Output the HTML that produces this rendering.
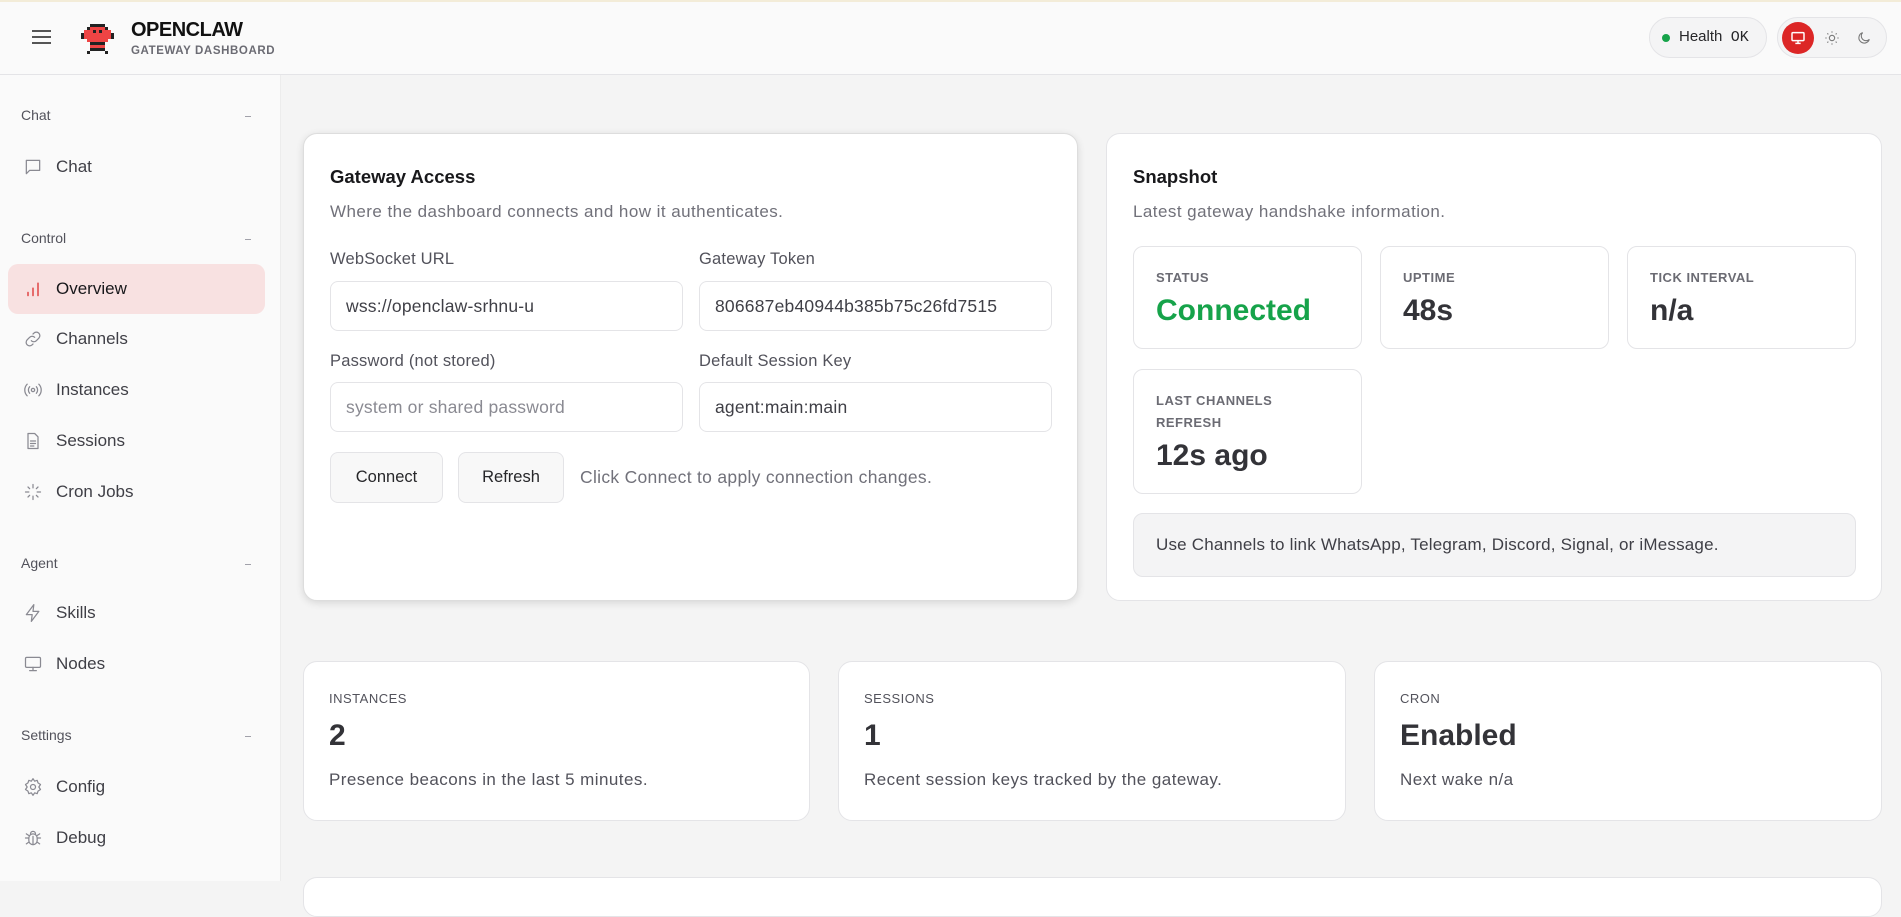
<!DOCTYPE html>
<html><head><meta charset="utf-8"><style>
*{box-sizing:border-box;margin:0;padding:0}
body{width:1901px;height:881px;overflow:hidden;background:#f4f4f4;font-family:"Liberation Sans",sans-serif;color:#27272a;position:relative}
.abs{position:absolute}
.hdr{left:0;top:0;width:1901px;height:75px;background:#fafafa;border-bottom:1px solid #e4e4e7;border-top:2px solid #f3ecd8}
.side{left:0;top:75px;width:281px;height:806px;background:#fafafa;border-right:1px solid #ececec}
.sec{position:absolute;left:21px;font-size:14px;color:#52525b}
.sec i{position:absolute;left:224px;top:9px;width:6px;height:1px;background:#a1a1aa}
.item{position:absolute;left:8px;width:257px;height:50px;border-radius:10px;font-size:17px;color:#3f3f46;display:flex;align-items:center;padding-left:15px}
.item svg{width:20px;height:20px;margin-right:13px;fill:none;stroke:#8a8a92;stroke-width:1.5;stroke-linecap:round;stroke-linejoin:round}
.card{background:#fff;border:1px solid #e4e4e7;border-radius:14px}
.t{font-size:18.5px;font-weight:bold;color:#18181b}
.sub{font-size:17px;letter-spacing:.45px;color:#71717a}
.lbl{font-size:16.5px;letter-spacing:.2px;color:#52525b}
.inp{border:1px solid #e4e4e7;border-radius:8px;background:#fff;height:50px;font-size:17.5px;letter-spacing:.2px;padding-left:15px;display:flex;align-items:center;color:#3f3f46}
.btn{border:1px solid #e4e4e7;border-radius:8px;background:#f8f8f8;height:51px;font-size:16.5px;display:flex;align-items:center;justify-content:center;color:#27272a}
.stat{border:1px solid #e4e4e7;border-radius:10px;background:#fff}
.sl{position:absolute;left:22px;font-size:13px;font-weight:bold;color:#6b6b73;letter-spacing:.5px;line-height:22px}
.sv{position:absolute;left:22px;font-size:30px;font-weight:bold;color:#333338}
</style></head><body>
<div class="abs hdr"></div>
<div class="abs" style="left:32px;top:30px;width:19px;height:2px;background:#555;box-shadow:0 6px 0 #555,0 12px 0 #555"></div>
<svg class="abs" style="left:81px;top:24px" width="33" height="33" viewBox="0 0 11 11" shape-rendering="crispEdges">
<rect x="3" y="0" width="5" height="1" fill="#222"/><rect x="2" y="1" width="7" height="1" fill="#222"/>
<rect x="3" y="1" width="5" height="1" fill="#ef4444"/><rect x="1" y="2" width="9" height="3" fill="#ef4444"/>
<rect x="0" y="3" width="1" height="2" fill="#222"/><rect x="10" y="3" width="1" height="2" fill="#222"/>
<rect x="2" y="5" width="7" height="1" fill="#ef4444"/><rect x="4" y="2" width="1" height="1" fill="#222"/><rect x="6" y="2" width="1" height="1" fill="#222"/>
<rect x="3" y="6" width="5" height="1" fill="#222"/><rect x="3" y="7" width="5" height="1" fill="#ef4444"/><rect x="3" y="8" width="5" height="1" fill="#222"/>
<rect x="2" y="9" width="1" height="1" fill="#222"/><rect x="8" y="9" width="1" height="1" fill="#222"/></svg>
<div class="abs" style="left:131px;top:19px;font-size:20px;font-weight:bold;color:#111;letter-spacing:-.5px">OPENCLAW</div>
<div class="abs" style="left:131px;top:45px;font-size:11.5px;font-weight:bold;color:#6b6b73;letter-spacing:.6px">GATEWAY DASHBOARD</div>
<div class="abs" style="left:1649px;top:17px;width:118px;height:41px;border:1px solid #e4e4e7;border-radius:21px;background:#f4f4f5"></div>
<div class="abs" style="left:1662px;top:34px;width:8px;height:8px;border-radius:50%;background:#16a34a"></div>
<div class="abs" style="left:1679px;top:28px;font-size:15px;color:#27272a">Health&nbsp;&nbsp;<span style="font-family:'Liberation Mono',monospace">OK</span></div>
<div class="abs" style="left:1777px;top:17px;width:110px;height:41px;border:1px solid #e4e4e7;border-radius:21px;background:#f4f4f5"></div>
<div class="abs" style="left:1782px;top:22px;width:32px;height:32px;border-radius:50%;background:#dc2626"></div>
<svg class="abs" style="left:1790px;top:30px" width="16" height="16" viewBox="0 0 24 24" fill="none" stroke="#fff" stroke-width="2.2"><rect x="3" y="4" width="18" height="12" rx="1.5"/><path d="M12 16v4M8 20h8"/></svg>
<svg class="abs" style="left:1824px;top:30px" width="16" height="16" viewBox="0 0 24 24" fill="none" stroke="#777" stroke-width="1.6"><circle cx="12" cy="12" r="4"/><path d="M12 2v2M12 20v2M2 12h2M20 12h2M5 5l1.5 1.5M17.5 17.5L19 19M5 19l1.5-1.5M17.5 6.5L19 5"/></svg>
<svg class="abs" style="left:1856px;top:30px" width="16" height="16" viewBox="0 0 24 24" fill="none" stroke="#777" stroke-width="1.6"><path d="M20 14A8 8 0 1 1 10 4a6 6 0 0 0 10 10z"/></svg>

<div class="abs side">
<div class="sec" style="top:32px">Chat<i></i></div>
<div class="item" style="top:67px"><svg viewBox="0 0 24 24"><path d="M4 4h16v12H8l-4 4z"/></svg>Chat</div>
<div class="sec" style="top:155px">Control<i></i></div>
<div class="item" style="top:189px;background:#f8e1e1;color:#18181b"><svg viewBox="0 0 24 24" style="stroke:#dc2626"><path d="M6 20v-4M12 20v-9M18 20V5"/></svg>Overview</div>
<div class="item" style="top:239px"><svg viewBox="0 0 24 24"><path d="M10 14a4 4 0 0 0 6 0l3-3a4 4 0 0 0-6-6l-1 1M14 10a4 4 0 0 0-6 0l-3 3a4 4 0 0 0 6 6l1-1"/></svg>Channels</div>
<div class="item" style="top:290px"><svg viewBox="0 0 24 24"><circle cx="12" cy="12" r="2"/><path d="M8 8a6 6 0 0 0 0 8M16 8a6 6 0 0 1 0 8M5 5a10 10 0 0 0 0 14M19 5a10 10 0 0 1 0 14"/></svg>Instances</div>
<div class="item" style="top:341px"><svg viewBox="0 0 24 24"><path d="M6 3h8l4 4v14H6zM9 12h6M9 15h6M9 18h4"/></svg>Sessions</div>
<div class="item" style="top:392px"><svg viewBox="0 0 24 24"><path d="M12 3v4M12 17v4M3 12h4M17 12h4M6 6l2 2M16 16l2 2M6 18l2-2M16 8l2-2"/></svg>Cron Jobs</div>
<div class="sec" style="top:480px">Agent<i></i></div>
<div class="item" style="top:513px"><svg viewBox="0 0 24 24"><path d="M13 2L4 14h7l-1 8 9-12h-7z"/></svg>Skills</div>
<div class="item" style="top:564px"><svg viewBox="0 0 24 24"><rect x="3" y="4" width="18" height="12" rx="1.5"/><path d="M12 16v4M8 20h8"/></svg>Nodes</div>
<div class="sec" style="top:652px">Settings<i></i></div>
<div class="item" style="top:687px"><svg viewBox="0 0 24 24"><circle cx="12" cy="12" r="3"/><path d="M12 2l2 3 3-1 1 3 3 2-2 3 2 3-3 2-1 3-3-1-2 3-2-3-3 1-1-3-3-2 2-3-2-3 3-2 1-3 3 1z"/></svg>Config</div>
<div class="item" style="top:738px"><svg viewBox="0 0 24 24"><rect x="7" y="7" width="10" height="13" rx="5"/><path d="M9 7a3 3 0 0 1 6 0M3 12h4M17 12h4M4 7l3 2M20 7l-3 2M4 19l3-2M20 19l-3-2M12 10v10"/></svg>Debug</div>
</div>

<div class="abs card" style="left:303px;top:133px;width:775px;height:468px;box-shadow:0 2px 8px rgba(0,0,0,.12);border-color:#ddd">
<div class="abs t" style="left:26px;top:32px">Gateway Access</div>
<div class="abs sub" style="left:26px;top:68px">Where the dashboard connects and how it authenticates.</div>
<div class="abs lbl" style="left:26px;top:116px">WebSocket URL</div>
<div class="abs lbl" style="left:395px;top:116px">Gateway Token</div>
<div class="abs inp" style="left:26px;top:147px;width:353px">wss://openclaw-srhnu-u</div>
<div class="abs inp" style="left:395px;top:147px;width:353px;overflow:hidden;white-space:nowrap">806687eb40944b385b75c26fd7515</div>
<div class="abs lbl" style="left:26px;top:218px">Password (not stored)</div>
<div class="abs lbl" style="left:395px;top:218px">Default Session Key</div>
<div class="abs inp" style="left:26px;top:248px;width:353px;color:#8a8a92">system or shared password</div>
<div class="abs inp" style="left:395px;top:248px;width:353px">agent:main:main</div>
<div class="abs btn" style="left:26px;top:318px;width:113px">Connect</div>
<div class="abs btn" style="left:154px;top:318px;width:106px">Refresh</div>
<div class="abs sub" style="left:276px;top:333px;font-size:17.5px;letter-spacing:.3px">Click Connect to apply connection changes.</div>
</div>

<div class="abs card" style="left:1106px;top:133px;width:776px;height:468px">
<div class="abs t" style="left:26px;top:32px">Snapshot</div>
<div class="abs sub" style="left:26px;top:68px">Latest gateway handshake information.</div>
<div class="abs stat" style="left:26px;top:112px;width:229px;height:103px"><div class="sl" style="top:20px">STATUS</div><div class="sv" style="top:47px;color:#16a34a">Connected</div></div>
<div class="abs stat" style="left:273px;top:112px;width:229px;height:103px"><div class="sl" style="top:20px">UPTIME</div><div class="sv" style="top:47px">48s</div></div>
<div class="abs stat" style="left:520px;top:112px;width:229px;height:103px"><div class="sl" style="top:20px">TICK INTERVAL</div><div class="sv" style="top:47px">n/a</div></div>
<div class="abs stat" style="left:26px;top:235px;width:229px;height:125px"><div class="sl" style="top:20px">LAST CHANNELS<br>REFRESH</div><div class="sv" style="top:69px">12s ago</div></div>
<div class="abs" style="left:26px;top:379px;width:723px;height:64px;background:#f4f4f5;border:1px solid #e4e4e7;border-radius:10px;font-size:17px;letter-spacing:.2px;color:#3f3f46;padding:21px 0 0 22px">Use Channels to link WhatsApp, Telegram, Discord, Signal, or iMessage.</div>
</div>

<div class="abs card" style="left:303px;top:661px;width:507px;height:160px">
<div class="sl" style="left:25px;top:26px;font-weight:normal;color:#52525b">INSTANCES</div>
<div class="sv" style="left:25px;top:57px">2</div>
<div class="abs sub" style="left:25px;top:108px;color:#52525b">Presence beacons in the last 5 minutes.</div></div>
<div class="abs card" style="left:838px;top:661px;width:508px;height:160px">
<div class="sl" style="left:25px;top:26px;font-weight:normal;color:#52525b">SESSIONS</div>
<div class="sv" style="left:25px;top:57px">1</div>
<div class="abs sub" style="left:25px;top:108px;color:#52525b">Recent session keys tracked by the gateway.</div></div>
<div class="abs card" style="left:1374px;top:661px;width:508px;height:160px">
<div class="sl" style="left:25px;top:26px;font-weight:normal;color:#52525b">CRON</div>
<div class="sv" style="left:25px;top:57px">Enabled</div>
<div class="abs sub" style="left:25px;top:108px;color:#52525b">Next wake n/a</div></div>
<div class="abs card" style="left:303px;top:877px;width:1579px;height:40px"></div>
</body></html>
